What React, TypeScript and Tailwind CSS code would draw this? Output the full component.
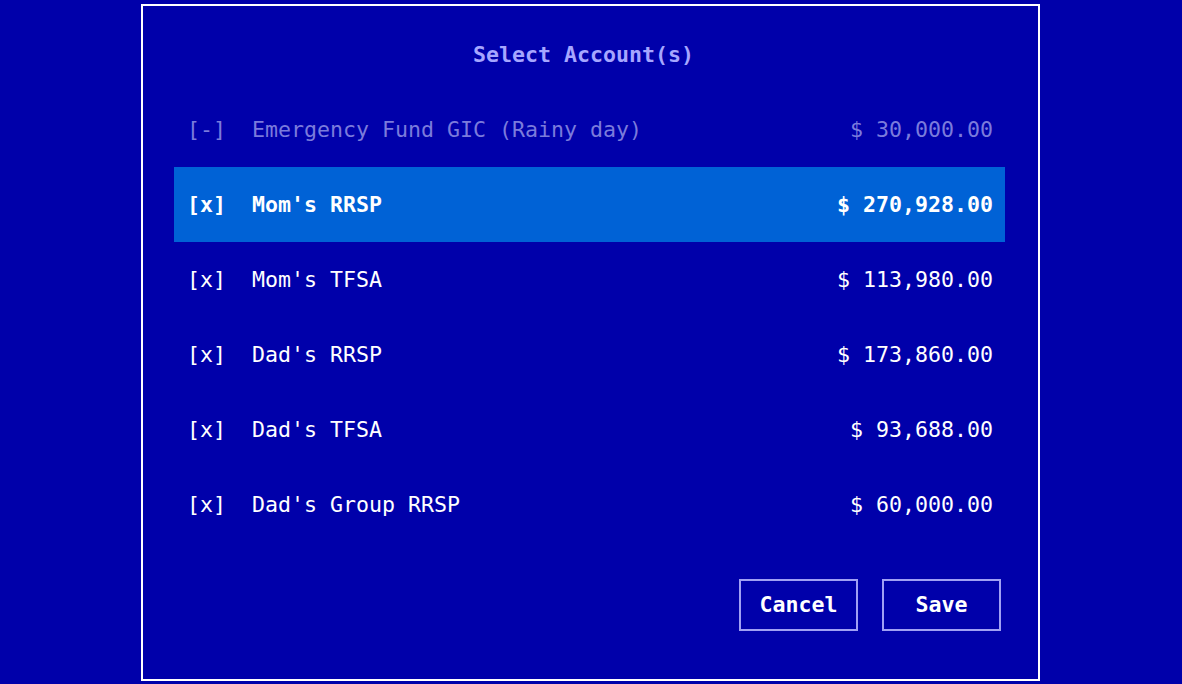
import React from "react";

type Account = {
  name: string;
  amount: string;
  state: "on" | "partial";
};

const accounts: Account[] = [
  { name: "Emergency Fund GIC (Rainy day)", amount: "$ 30,000.00", state: "partial" },
  { name: "Mom's RRSP", amount: "$ 270,928.00", state: "on" },
  { name: "Mom's TFSA", amount: "$ 113,980.00", state: "on" },
  { name: "Dad's RRSP", amount: "$ 173,860.00", state: "on" },
  { name: "Dad's TFSA", amount: "$ 93,688.00", state: "on" },
  { name: "Dad's Group RRSP", amount: "$ 60,000.00", state: "on" },
];

const mono = "font-['DejaVu_Sans_Mono','Liberation_Mono',monospace]";

function AccountRow({ account, focused }: { account: Account; focused: boolean }) {
  const dim = account.state === "partial";
  const color = focused ? "text-white font-bold" : dim ? "text-[#7b7bdc]" : "text-white";
  return (
    <div
      className={`h-[75px] flex items-center justify-between pt-[2px] pl-[13px] pr-[12px] whitespace-pre ${color} ${
        focused ? "bg-[#0062d6]" : ""
      }`}
    >
      <span>{`${dim ? "[-]" : "[x]"}  ${account.name}`}</span>
      <span>{account.amount}</span>
    </div>
  );
}

export default function App() {
  return (
    <div className={`w-full h-[684px] bg-[#0000aa] flex pl-[141px] pt-[4px] ${mono} text-[21.6px]`}>
      <div className="w-[899px] h-[677px] border-2 border-white flex flex-col">
        <h1 className="mt-[34px] h-[30px] leading-[30px] text-center pr-[14px] font-bold text-[#a6a6ff]">
          Select Account(s)
        </h1>

        <div className="mt-[22px] pl-[31px] pr-[33px] flex flex-col">
          {accounts.map((a, i) => (
            <AccountRow key={a.name} account={a} focused={i === 1} />
          ))}
        </div>

        <div className="mt-[37px] pr-[37px] flex justify-end gap-[24px]">
          <button className="w-[119px] h-[52px] border-2 border-[#a0a0f4] text-white font-bold">
            Cancel
          </button>
          <button className="w-[119px] h-[52px] border-2 border-[#a0a0f4] text-white font-bold">
            Save
          </button>
        </div>
      </div>
    </div>
  );
}
